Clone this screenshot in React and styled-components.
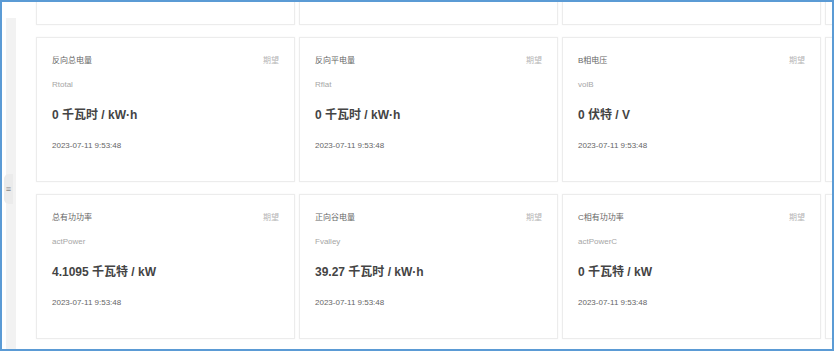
import React from "react";
import styled, { createGlobalStyle } from "styled-components";

const GlobalStyle = createGlobalStyle`
	html, body {
		margin: 0;
		padding: 0;
		background: #fff;
	}
	body {
		font-family: "Liberation Sans", "Noto Sans CJK SC", sans-serif;
	}
`;

const Frame = styled.div`
	width: 834px;
	height: 351px;
	box-sizing: border-box;
	border: 2px solid #5b9bd5;
	background: #fff;
	display: flex;
	overflow: hidden;
`;

const Side = styled.div`
	position: relative;
	flex: 0 0 10px;
	margin: 16px 0 0 4px;
	background: #f2f2f2;
`;

const Handle = styled.div`
	position: absolute;
	left: -2px;
	top: 156px;
	width: 9px;
	height: 30px;
	background: #ebebeb;
	border-radius: 5px 0 0 5px;
	display: flex;
	align-items: center;
	justify-content: center;
	color: #888;
	font-size: 9px;
	line-height: 1;
`;

const Main = styled.div`
	flex: 1;
	overflow: hidden;
	padding-left: 20px;
`;

const Grid = styled.div`
	display: grid;
	grid-template-columns: repeat(4, 259px);
	grid-auto-rows: 145px;
	column-gap: 4px;
	row-gap: 12px;
	margin-top: -122px;
`;

const Card = styled.div`
	box-sizing: border-box;
	border: 1px solid #ececec;
	box-shadow: 0 0 2px rgba(0, 0, 0, 0.04);
	background: #fff;
	padding: 17px 15px 0 15px;
	white-space: nowrap;
`;

const Head = styled.div`
	display: flex;
	justify-content: space-between;
	font-size: 8px;
	line-height: 12px;
	color: #666;
`;

const Expect = styled.span`
	color: #b5b5b5;
`;

const Code = styled.div`
	margin-top: 12px;
	font-size: 8px;
	line-height: 12px;
	color: #a6a6a6;
`;

const Value = styled.div`
	margin-top: 16px;
	font-size: 12px;
	line-height: 16px;
	font-weight: bold;
	color: #444;
`;

const Time = styled.div`
	margin-top: 17px;
	font-size: 8px;
	line-height: 12px;
	color: #666;
`;

const DATE = "2023-07-11 9:53:48";

// the first row is scrolled above the view, only its bottom edge shows
const items = [
	{ hidden: true },
	{ hidden: true },
	{ hidden: true },
	{ hidden: true },
	{ name: "反向总电量", code: "Rtotal", value: "0 千瓦时 / kW·h" },
	{ name: "反向平电量", code: "Rflat", value: "0 千瓦时 / kW·h" },
	{ name: "B相电压", code: "volB", value: "0 伏特 / V" },
	{ hidden: true },
	{ name: "总有功功率", code: "actPower", value: "4.1095 千瓦特 / kW" },
	{ name: "正向谷电量", code: "Fvalley", value: "39.27 千瓦时 / kW·h" },
	{ name: "C相有功功率", code: "actPowerC", value: "0 千瓦特 / kW" },
	{ hidden: true },
];

const App = () => {
	return (
		<>
			<GlobalStyle />
			<Frame>
				<Side>
					<Handle>≡</Handle>
				</Side>
				<Main>
					<Grid>
						{items.map((item, index) => (
							<Card key={index}>
								{!item.hidden && (
									<>
										<Head>
											<span>{item.name}</span>
											<Expect>期望</Expect>
										</Head>
										<Code>{item.code}</Code>
										<Value>{item.value}</Value>
										<Time>{DATE}</Time>
									</>
								)}
							</Card>
						))}
					</Grid>
				</Main>
			</Frame>
		</>
	);
};

export default App;
